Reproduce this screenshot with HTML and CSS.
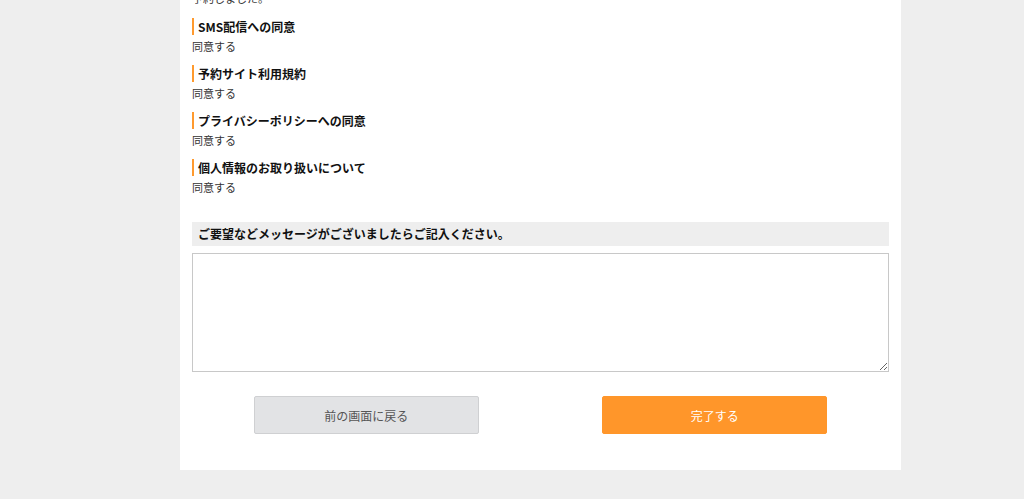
FILE: index.html
```html
<!DOCTYPE html>
<html lang="ja">
<head>
<meta charset="utf-8">
<link rel="stylesheet" href="styles.css">
</head>
<body>
<div class="card">
  <p class="lead">予約しました。</p>
  <div class="item">
    <h3 class="item-title">SMS配信への同意</h3>
    <p class="item-value">同意する</p>
  </div>
  <div class="item">
    <h3 class="item-title">予約サイト利用規約</h3>
    <p class="item-value">同意する</p>
  </div>
  <div class="item">
    <h3 class="item-title">プライバシーポリシーへの同意</h3>
    <p class="item-value">同意する</p>
  </div>
  <div class="item">
    <h3 class="item-title">個人情報のお取り扱いについて</h3>
    <p class="item-value">同意する</p>
  </div>
  <h3 class="msg-title">ご要望などメッセージがございましたらご記入ください。</h3>
  <textarea class="msg-box"></textarea>
  <div class="actions">
    <div class="action-col"><button class="btn btn-back">前の画面に戻る</button></div>
    <div class="action-col"><button class="btn btn-done">完了する</button></div>
  </div>
</div>
</body>
</html>
```
FILE: styles.css
```css
html, body {
  margin: 0;
  padding: 0;
  background: #eeeeee;
  font-family: "Noto Sans CJK JP", "Noto Sans", sans-serif;
  color: #222;
}
.card {
  margin: -10px 0 0 180px;
  width: 721px;
  box-sizing: border-box;
  background: #fff;
  padding: 0 12px 36px 12px;
}
.lead {
  margin: 0 0 12px 0;
  font-size: 11px;
  line-height: 16px;
  color: #333;
}
.item {
  margin-bottom: 11px;
}
.item-title {
  margin: 0 0 3px 0;
  font-size: 12px;
  line-height: 17px;
  font-weight: bold;
  color: #111;
  border-left: 2px solid #ff9a2e;
  padding-left: 4px;
}
.item-value {
  margin: 0;
  font-size: 11px;
  line-height: 16px;
  color: #333;
}
.msg-title {
  margin: 27px 0 7px 0;
  background: #eeeeee;
  font-size: 12px;
  line-height: 24px;
  font-weight: bold;
  padding-left: 6px;
  color: #111;
}
.msg-box {
  display: block;
  width: 100%;
  height: 119px;
  box-sizing: border-box;
  border: 1px solid #c8c8c8;
  margin: 0;
  resize: vertical;
  font-family: inherit;
}
.actions {
  display: grid;
  grid-template-columns: 1fr 1fr;
  margin-top: 24px;
}
.action-col {
  display: flex;
  justify-content: center;
}
.btn {
  width: 225px;
  height: 38px;
  border-radius: 2px;
  font-family: inherit;
  font-size: 12px;
  cursor: pointer;
}
.btn-back {
  background: #e2e3e5;
  border: 1px solid #cfd0d2;
  color: #555;
}
.btn-done {
  background: #ff962a;
  border: 1px solid #ff962a;
  color: #fff;
}
```
